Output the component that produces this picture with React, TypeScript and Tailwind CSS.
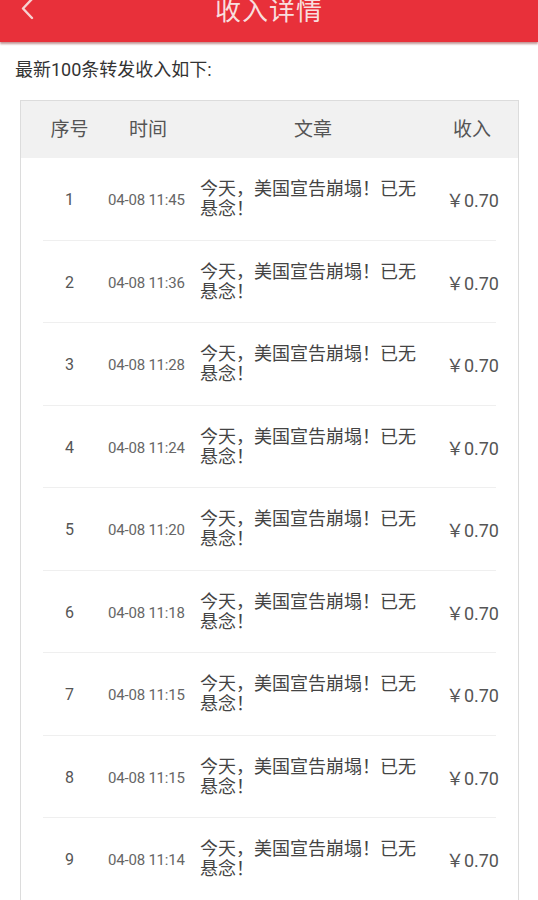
const ROWS = [
  { n: 1, time: "04-08 11:45" },
  { n: 2, time: "04-08 11:36" },
  { n: 3, time: "04-08 11:28" },
  { n: 4, time: "04-08 11:24" },
  { n: 5, time: "04-08 11:20" },
  { n: 6, time: "04-08 11:18" },
  { n: 7, time: "04-08 11:15" },
  { n: 8, time: "04-08 11:15" },
  { n: 9, time: "04-08 11:14" },
  { n: 10, time: "04-08 11:10" },
];

const TITLE = "今天，美国宣告崩塌！已无悬念！";

export default function App() {
  return (
    <div
      className="w-[538px] h-[900px] overflow-hidden bg-white"
      style={{ fontFamily: 'Roboto, "Noto Sans CJK SC", sans-serif' }}
    >
      {/* Top bar */}
      <div className="relative h-[42px] bg-[#e8303a] shadow-[0_2px_2px_rgba(120,20,20,0.45)] flex justify-center">
        <svg
          className="absolute left-[18px] top-[-2px]"
          width="18"
          height="22"
          viewBox="0 0 18 22"
          fill="none"
        >
          <path d="M14 1 L5 10.5 L14 20" stroke="#f6d2d2" strokeWidth="2.4" strokeLinecap="round" strokeLinejoin="round" />
        </svg>
        <span className="text-[26px] leading-[26px] -mt-[2px] text-[#f8dede] tracking-[1px]">
          收入详情
        </span>
      </div>

      <div className="pl-[15px] pt-[15px] text-[18px] leading-[26px] text-[#333]">
        最新100条转发收入如下:
      </div>

      <div className="ml-[20px] mt-[17px] w-[499px] border border-[#dcdcdc]">
        {/* Column titles */}
        <div className="h-[57px] flex items-center bg-[#f1f1f1] text-[19px] text-[#555] pt-[2px]">
          <div className="w-[97px] text-center">序号</div>
          <div className="w-[60px] text-center">时间</div>
          <div className="w-[270px] text-center">文章</div>
          <div className="w-[48px] text-center">收入</div>
        </div>

        {ROWS.map((r) => (
          <div key={r.n} className="h-[82.5px] flex flex-col">
            <div className="flex-1 flex items-center pt-[3px]">
              <div className="w-[87px] pl-[10px] text-center text-[16px] text-[#555]">{r.n}</div>
              <div className="w-[92px] text-[15px] text-[#666] tracking-[-0.2px]">{r.time}</div>
              <div className="w-[228px] text-[18px] leading-[20px] text-[#444] -mt-[2px]">{TITLE}</div>
              <div className="flex-1 text-right pr-[19px] text-[18px] text-[#555]">
                <span style={{ fontFamily: '"Noto Sans CJK SC", sans-serif' }}>￥</span>0.70
              </div>
            </div>
            <div className="mx-[22px] border-b border-[#efefef]" />
          </div>
        ))}
      </div>
    </div>
  );
}
